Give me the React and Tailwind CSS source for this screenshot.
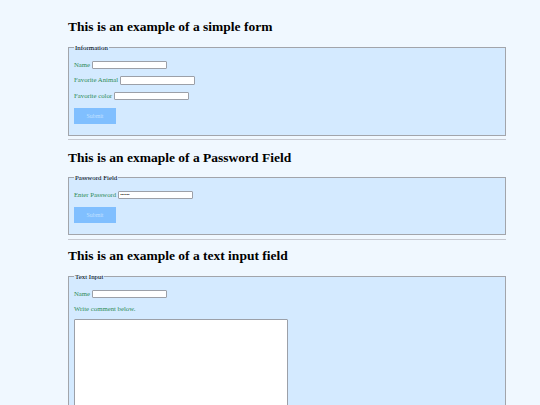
import React from "react";

const label = "text-[6.75px] leading-[8px] text-[#2e8b57] whitespace-nowrap";
const input =
  "h-[8.2px] w-[74.5px] bg-white border border-[#9ca0a8] rounded-[1px] px-[1px] text-[5.6px] leading-[6px] text-black outline-none";
const fieldset = "mx-0 border border-[#a2a5ab] bg-[#d4eaff] px-[5px]";
const legend = "px-[1px] text-[6.9px] leading-[7.8px] text-black";
const heading = "text-[13.5px] font-bold leading-[16px] text-black";

function Row({ text, type = "text", value, className = "" }) {
  return (
    <div className={`flex items-center gap-[2px] h-[8.2px] ${className}`}>
      <label className={label}>{text}</label>
      <input type={type} defaultValue={value} className={input} />
    </div>
  );
}

function SubmitButton({ className = "" }) {
  return (
    <button
      type="button"
      className={`block w-[42px] h-[16.4px] bg-[#80bfff] text-[#c2e1ff] text-[5.8px] leading-[6px] ${className}`}
    >
      Submit
    </button>
  );
}

export default function App() {
  return (
    <div className="min-h-screen bg-[#f0f8ff] font-['Liberation_Serif','Times_New_Roman',serif] overflow-hidden h-[405px]">
      <div className="ml-[68px] w-[437.5px] pt-[19.4px]">
        <h1 className={heading}>This is an example of a simple form</h1>
        <fieldset className={`${fieldset} mt-[8.4px] pb-[10.6px]`}>
          <legend className={legend}>Information</legend>
          <Row text="Name" className="mt-[9px]" />
          <Row text="Favorite Animal" className="mt-[7.6px]" />
          <Row text="Favorite color" className="mt-[7px]" />
          <SubmitButton className="mt-[8px]" />
        </fieldset>
        <hr className="mt-[3.7px] w-[438px] border-t border-[#c6c9d1]" />

        <h1 className={`${heading} mt-[9.1px]`}>This is an exmaple of a Password Field</h1>
        <fieldset className={`${fieldset} mt-[8.4px] pb-[10.6px]`}>
          <legend className={legend}>Password Field</legend>
          <div className="flex items-center gap-[2px] h-[8.2px] mt-[9px]">
            <label className={label}>Enter Password</label>
            <input
              type="password"
              defaultValue="123456"
              className="h-[8.2px] w-[74.5px] bg-white border border-[#9ca0a8] rounded-[1px] px-[1px] text-[4.5px] leading-[6px] text-[#111] [-webkit-text-security:disc] outline-none"
            />
          </div>
          <SubmitButton className="mt-[8px]" />
        </fieldset>
        <hr className="mt-[4px] w-[438px] border-t border-[#c6c9d1]" />

        <h1 className={`${heading} mt-[8.6px]`}>This is an example of a text input field</h1>
        <fieldset className={`${fieldset} mt-[8.4px] pb-[10.6px]`}>
          <legend className={legend}>Text Input</legend>
          <Row text="Name" className="mt-[9px]" />
          <p className={`${label} mt-[7.5px]`}>Write comment below.</p>
          <textarea className="block mt-[5.5px] w-[213.5px] h-[150px] bg-white border border-[#9ca0a8] rounded-[1px] resize-none outline-none" />
        </fieldset>
      </div>
    </div>
  );
}
